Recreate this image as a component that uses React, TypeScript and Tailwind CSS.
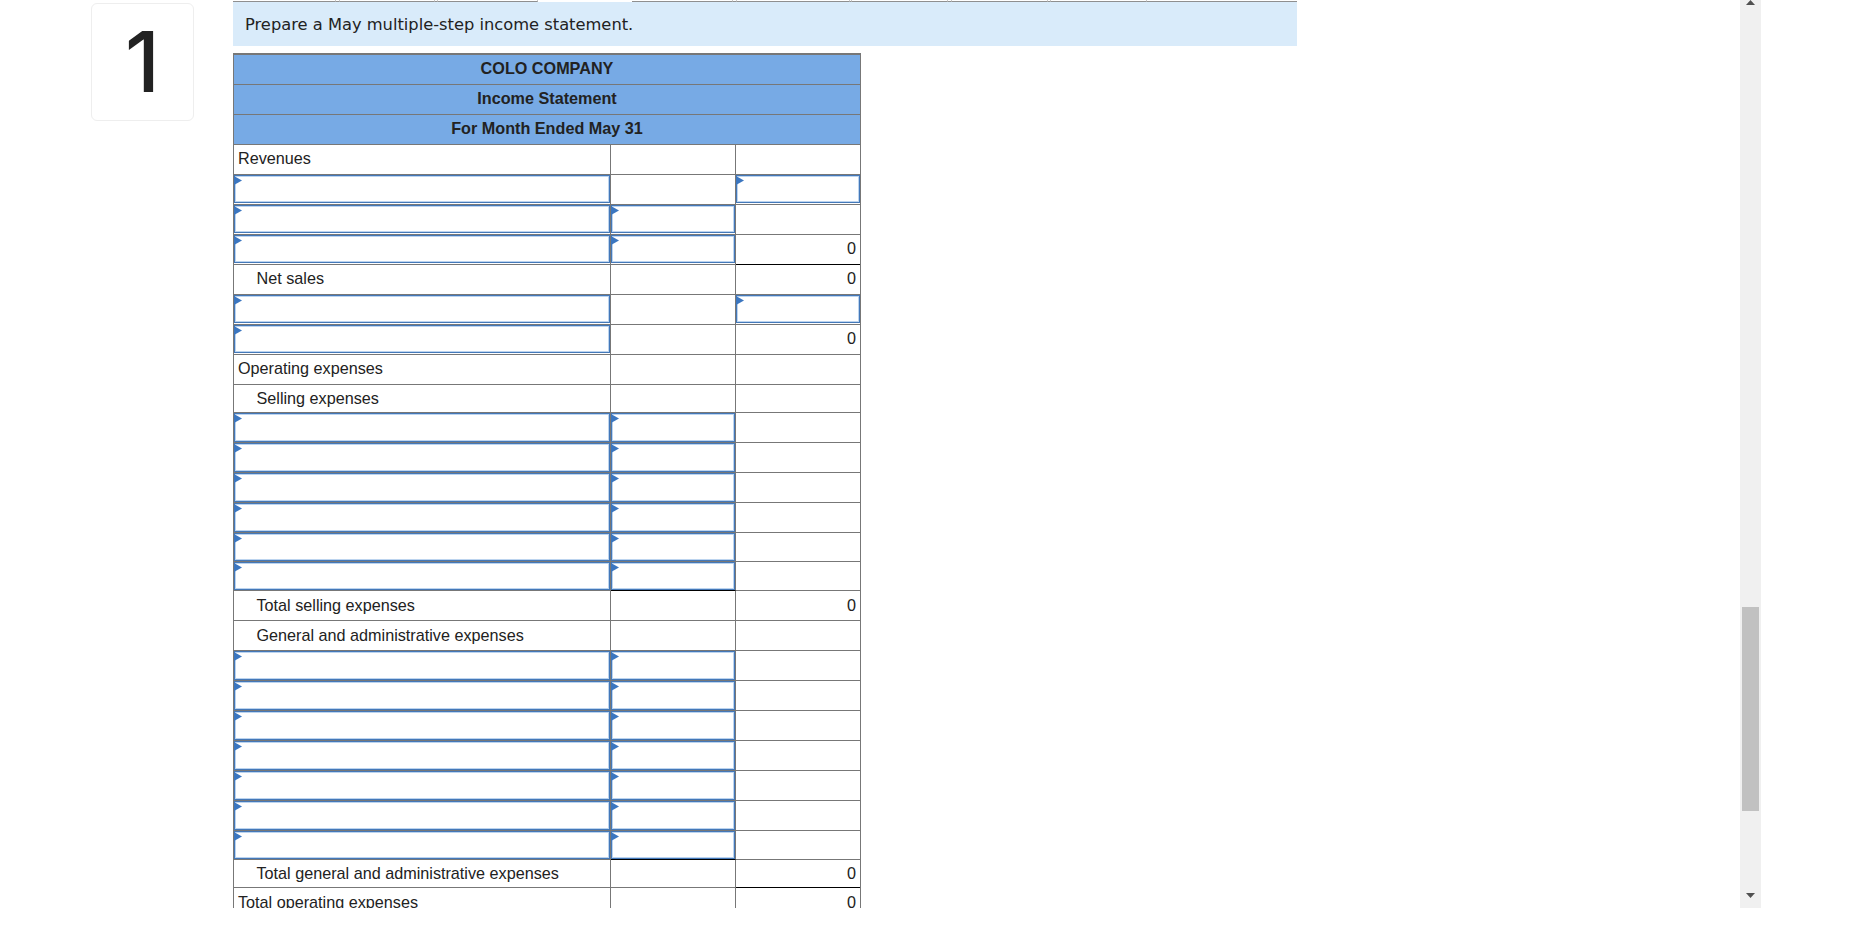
function Tri() {
  return <svg className="absolute left-[-1px] top-0" width="8" height="9" viewBox="0 0 8 9"><path d="M0 0 L8 4.5 L0 9 Z" fill="#3b76c0" /></svg>;
}
function Input({ full }: { full?: boolean }) {
  return (
    <div className={`relative self-start ${full ? "h-full" : "h-[calc(100%-1px)]"} w-full border border-[#4478b8] shadow-[inset_0_0_0_1px_#bcd4ef] bg-white`}>
      <Tri />
    </div>
  );
}

type Row = { h: number; a?: string; indent?: boolean; ai?: boolean; bi?: boolean; ci?: boolean; c?: string; cTop?: boolean; bTop?: boolean; full?: boolean; up?: boolean };

const rows: Row[] = [
  { h: 30, a: "Revenues", up: true },
  { h: 30, ai: true, ci: true },
  { h: 30, ai: true, bi: true },
  { h: 30, ai: true, bi: true, c: "0", up: true },
  { h: 30, a: "Net sales", indent: true, c: "0", cTop: true, up: true },
  { h: 30, ai: true, ci: true },
  { h: 30, ai: true, c: "0", up: true },
  { h: 30, a: "Operating expenses", up: true },
  { h: 28, a: "Selling expenses", indent: true },
  { h: 30, ai: true, bi: true, full: true },
  { h: 30, ai: true, bi: true, full: true },
  { h: 30, ai: true, bi: true, full: true },
  { h: 30, ai: true, bi: true, full: true },
  { h: 29, ai: true, bi: true, full: true },
  { h: 29, ai: true, bi: true, full: true },
  { h: 30, a: "Total selling expenses", indent: true, c: "0", bTop: true },
  { h: 30, a: "General and administrative expenses", indent: true },
  { h: 30, ai: true, bi: true, full: true },
  { h: 30, ai: true, bi: true, full: true },
  { h: 30, ai: true, bi: true, full: true },
  { h: 30, ai: true, bi: true, full: true },
  { h: 30, ai: true, bi: true, full: true },
  { h: 30, ai: true, bi: true, full: true },
  { h: 29, ai: true, bi: true, full: true },
  { h: 28, a: "Total general and administrative expenses", indent: true, c: "0", bTop: true },
  { h: 30, a: "Total operating expenses", c: "0", cTop: true },
];

function TableRow({ r }: { r: Row }) {
  return (
    <div className="flex border-b border-[#777]" style={{ height: r.h }}>
      <div className={`w-[377px] shrink-0 border-r border-[#777] flex items-center ${r.ai ? "" : r.indent ? "pl-[22.5px]" : "pl-[4px]"} ${r.up && !r.ai ? "pb-[2px]" : ""}`}>
        {r.ai ? <Input full={r.full} /> : r.a}
      </div>
      <div className={`w-[125px] shrink-0 border-r border-[#777] flex ${r.bTop ? "border-t border-t-black -mt-px" : ""}`}>
        {r.bi ? <Input full={r.full} /> : null}
      </div>
      <div className={`flex-1 flex items-center justify-end ${r.up && !r.ci ? "pb-[2px]" : ""} ${r.ci ? "" : "pr-[4px]"} ${r.cTop ? "border-t border-t-black -mt-px" : ""}`}>
        {r.ci ? <Input full={r.full} /> : r.c}
      </div>
    </div>
  );
}

const tabsBefore = ["w-[103px]", "w-[4px]", "w-[95px]", "w-[3px]", "w-[100px]"];
const tabsAfter = ["w-[101px]", "w-[4px]", "w-[113px]", "w-[2px]", "w-[96px]", "w-[4px]", "w-[96px]", "w-[3px]", "w-[96px]"];

export default function App() {
  return (
    <div className="w-[1862px] h-[930px] bg-white overflow-hidden">
      <div className="flex h-[908px] overflow-hidden">
        <div className="w-[91px] shrink-0" />
        <div className="w-[103px] h-[118px] mt-[3px] shrink-0 bg-white border border-[#eeeeee] rounded-[6px] flex items-center justify-center text-[#222] text-[84px] leading-none font-medium font-['Inter',sans-serif]">
          1
        </div>
        <div className="w-[39px] shrink-0" />
        <div className="w-[1064px] shrink-0">
          <div className="flex h-[2px]">
            {tabsBefore.map((w, i) => (
              <div key={i} className={`${w} h-[2px] border-r border-r-[#c8c8c8] border-b border-b-[#8f8f8f]`} />
            ))}
            <div className="w-[94px] h-[2px]" />
            {tabsAfter.map((w, i) => (
              <div key={i} className={`${w} h-[2px] border-r border-r-[#c8c8c8] border-b border-b-[#8f8f8f]`} />
            ))}
            <div className="flex-1 h-[2px] border-b border-b-[#8f8f8f]" />
          </div>
          <div className="h-[44px] bg-[#d9ebfa] flex items-center pl-[12px] pt-[2px] text-[16.3px] text-[#222] font-['DejaVu_Sans',sans-serif]">
            Prepare a May multiple-step income statement.
          </div>
          <div className="mt-[7px] w-[628px] border-t border-l border-r border-[#777] text-[16.2px] text-[#222] font-['Liberation_Sans',sans-serif]">
            <div className="bg-[#77aae5] font-bold text-center">
              <div className="h-[31px] leading-[27px] border-t border-[#777] border-b">COLO COMPANY</div>
              <div className="h-[30px] leading-[27px] border-b border-[#777]">Income Statement</div>
              <div className="h-[30px] leading-[27px] border-b border-[#777]">For Month Ended May 31</div>
            </div>
            {rows.map((r, i) => <TableRow key={i} r={r} />)}
          </div>
        </div>
        <div className="w-[443px] shrink-0" />
        <div className="w-[21px] shrink-0 bg-[#f0f0f0] flex flex-col items-center h-[908px]">
          <svg width="9" height="5" viewBox="0 0 9 5" className="shrink-0"><path d="M4.5 0 L9 5 L0 5 Z" fill="#505050" /></svg>
          <div className="w-[17px] h-[204px] mt-[602px] bg-[#c1c1c1] shrink-0" />
          <svg width="9" height="5" viewBox="0 0 9 5" className="mt-[82px] shrink-0"><path d="M0 0 L9 0 L4.5 5 Z" fill="#505050" /></svg>
        </div>
      </div>
    </div>
  );
}
